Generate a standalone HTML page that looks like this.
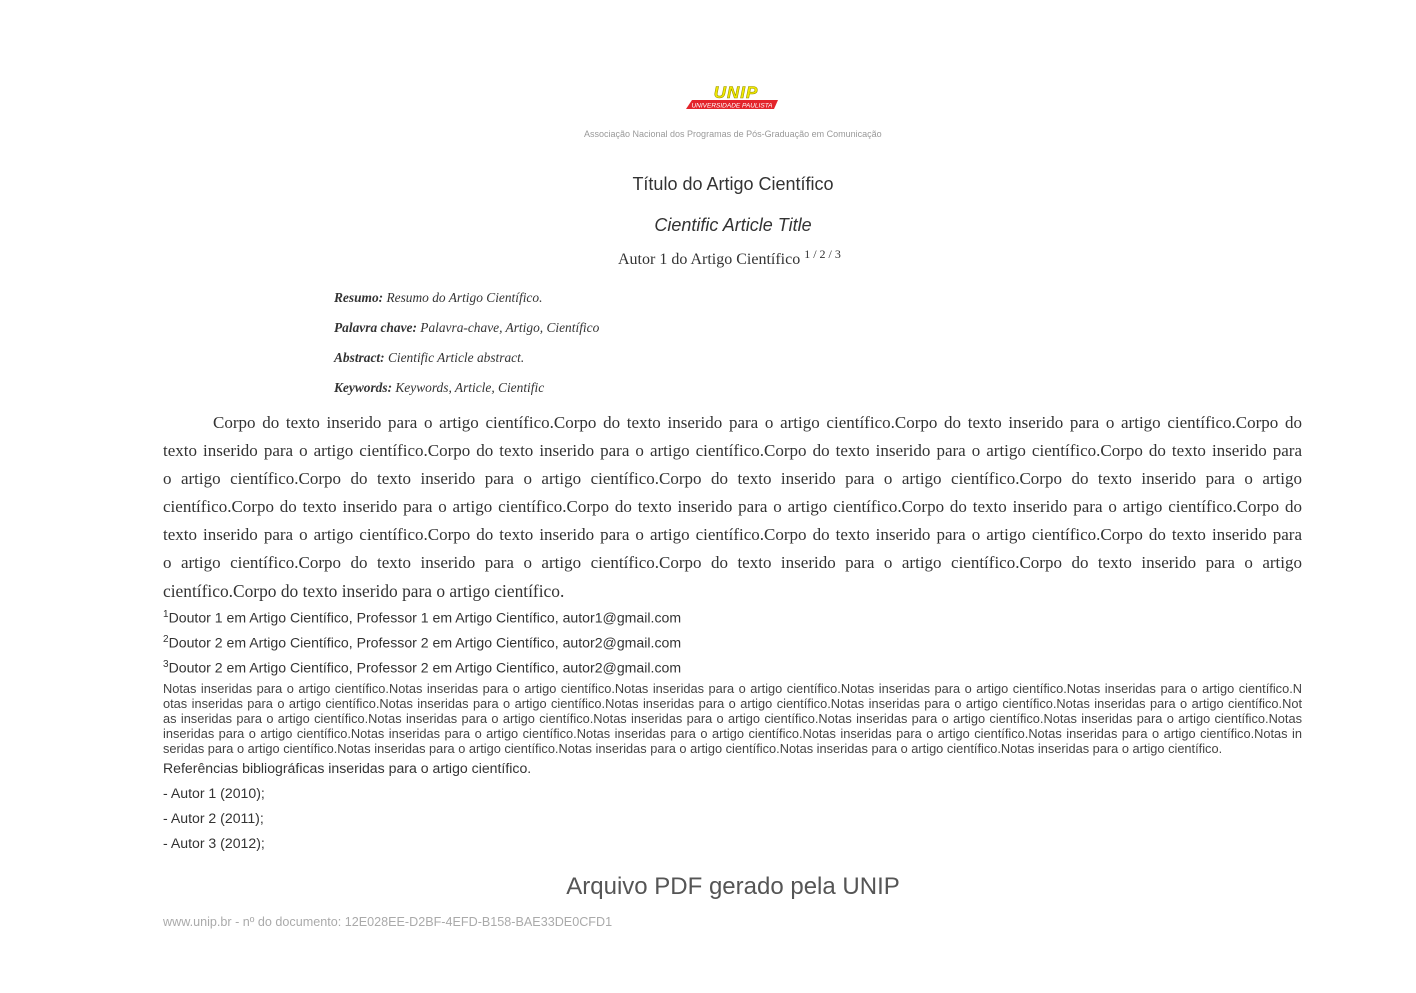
<!DOCTYPE html>
<html><head><meta charset="utf-8"><style>
body{margin:0;width:1416px;height:993px;background:#fff;position:relative;overflow:hidden;color:#333}
.a{position:absolute;white-space:nowrap}
.sans{font-family:"Liberation Sans",Arial,sans-serif}
.serif{font-family:"Liberation Serif",serif}
.j{position:absolute;left:163px;width:1139px;text-align:justify;text-align-last:justify;font-family:"Liberation Serif",serif;font-size:17px;color:#333;white-space:normal;height:22px;overflow:hidden}
.n{position:absolute;left:163px;width:1139px;text-align:justify;text-align-last:justify;font-family:"Liberation Sans",sans-serif;font-size:12.8px;color:#444;height:15px;overflow:hidden;line-height:15px}
.k{font-family:"Liberation Serif",serif;font-size:13.4px;font-style:italic;color:#333;left:334px}
</style></head><body>
<svg class="a" style="left:686px;top:84px" width="94" height="26" viewBox="0 0 94 26">
<polygon points="14,0 92,0 88,15 10,15" fill="#fff"/>
<text x="50" y="14" text-anchor="middle" font-family="Liberation Sans" font-weight="bold" font-style="italic" font-size="17" fill="#f2ea00" stroke="#9a9400" stroke-width="0.6" letter-spacing="1">UNIP</text>
<polygon points="6,16 92,16 88,25 0,25" fill="#e3242b"/>
<text x="46" y="23.5" text-anchor="middle" font-family="Liberation Sans" font-style="italic" font-size="6.5" fill="#fff">UNIVERSIDADE PAULISTA</text>
</svg>
<div class="a sans" style="left:584px;top:129px;font-size:9px;color:#999">Associação Nacional dos Programas de Pós-Graduação em Comunicação</div>
<div class="a sans" style="left:0;width:1466px;text-align:center;top:174px;font-size:18px;color:#333">Título do Artigo Científico</div>
<div class="a sans" style="left:0;width:1466px;text-align:center;top:215px;font-size:18px;font-style:italic;color:#333">Cientific Article Title</div>
<div class="a serif" style="left:618px;top:251px;font-size:16px;color:#333">Autor 1 do Artigo Científico <span style="font-size:12px;position:relative;top:-6px">1 / 2 / 3</span></div>
<div class="a k" style="top:290px"><b>Resumo:</b> Resumo do Artigo Científico.</div>
<div class="a k" style="top:320px"><b>Palavra chave:</b> Palavra-chave, Artigo, Científico</div>
<div class="a k" style="top:350px"><b>Abstract:</b> Cientific Article abstract.</div>
<div class="a k" style="top:380px"><b>Keywords:</b> Keywords, Article, Cientific</div>

<div class="j" style="top:413px;left:213px;width:1089px">Corpo do texto inserido para o artigo científico.Corpo do texto inserido para o artigo científico.Corpo do texto inserido para o artigo científico.Corpo do</div>
<div class="j" style="top:441px">texto inserido para o artigo científico.Corpo do texto inserido para o artigo científico.Corpo do texto inserido para o artigo científico.Corpo do texto inserido para</div>
<div class="j" style="top:469px">o artigo científico.Corpo do texto inserido para o artigo científico.Corpo do texto inserido para o artigo científico.Corpo do texto inserido para o artigo</div>
<div class="j" style="top:497px">científico.Corpo do texto inserido para o artigo científico.Corpo do texto inserido para o artigo científico.Corpo do texto inserido para o artigo científico.Corpo do</div>
<div class="j" style="top:525px">texto inserido para o artigo científico.Corpo do texto inserido para o artigo científico.Corpo do texto inserido para o artigo científico.Corpo do texto inserido para</div>
<div class="j" style="top:553px">o artigo científico.Corpo do texto inserido para o artigo científico.Corpo do texto inserido para o artigo científico.Corpo do texto inserido para o artigo</div>
<div class="a serif" style="left:163px;top:581px;font-size:17.4px;color:#333">científico.Corpo do texto inserido para o artigo científico.</div>

<div class="a sans" style="left:163px;top:609px;font-size:14.1px;color:#333"><sup style="font-size:10px">1</sup>Doutor 1 em Artigo Científico, Professor 1 em Artigo Científico, autor1@gmail.com</div>
<div class="a sans" style="left:163px;top:634px;font-size:14.1px;color:#333"><sup style="font-size:10px">2</sup>Doutor 2 em Artigo Científico, Professor 2 em Artigo Científico, autor2@gmail.com</div>
<div class="a sans" style="left:163px;top:659px;font-size:14.1px;color:#333"><sup style="font-size:10px">3</sup>Doutor 2 em Artigo Científico, Professor 2 em Artigo Científico, autor2@gmail.com</div>

<div class="n" style="top:681px">Notas inseridas para o artigo científico.Notas inseridas para o artigo científico.Notas inseridas para o artigo científico.Notas inseridas para o artigo científico.Notas inseridas para o artigo científico.N</div>
<div class="n" style="top:696px">otas inseridas para o artigo científico.Notas inseridas para o artigo científico.Notas inseridas para o artigo científico.Notas inseridas para o artigo científico.Notas inseridas para o artigo científico.Not</div>
<div class="n" style="top:711px">as inseridas para o artigo científico.Notas inseridas para o artigo científico.Notas inseridas para o artigo científico.Notas inseridas para o artigo científico.Notas inseridas para o artigo científico.Notas</div>
<div class="n" style="top:726px">inseridas para o artigo científico.Notas inseridas para o artigo científico.Notas inseridas para o artigo científico.Notas inseridas para o artigo científico.Notas inseridas para o artigo científico.Notas in</div>
<div class="a sans" style="left:163px;top:741px;font-size:12.8px;color:#444;line-height:15px">seridas para o artigo científico.Notas inseridas para o artigo científico.Notas inseridas para o artigo científico.Notas inseridas para o artigo científico.Notas inseridas para o artigo científico.</div>

<div class="a sans" style="left:163px;top:760px;font-size:14.1px;color:#333">Referências bibliográficas inseridas para o artigo científico.</div>
<div class="a sans" style="left:163px;top:785px;font-size:14.1px;color:#333">- Autor 1 (2010);</div>
<div class="a sans" style="left:163px;top:810px;font-size:14.1px;color:#333">- Autor 2 (2011);</div>
<div class="a sans" style="left:163px;top:835px;font-size:14.1px;color:#333">- Autor 3 (2012);</div>

<div class="a sans" style="left:0;width:1466px;text-align:center;top:873px;font-size:24px;color:#555">Arquivo PDF gerado pela UNIP</div>
<div class="a sans" style="left:163px;top:915px;font-size:12.6px;color:#aaa">www.unip.br - nº do documento: 12E028EE-D2BF-4EFD-B158-BAE33DE0CFD1</div>
</body></html>
